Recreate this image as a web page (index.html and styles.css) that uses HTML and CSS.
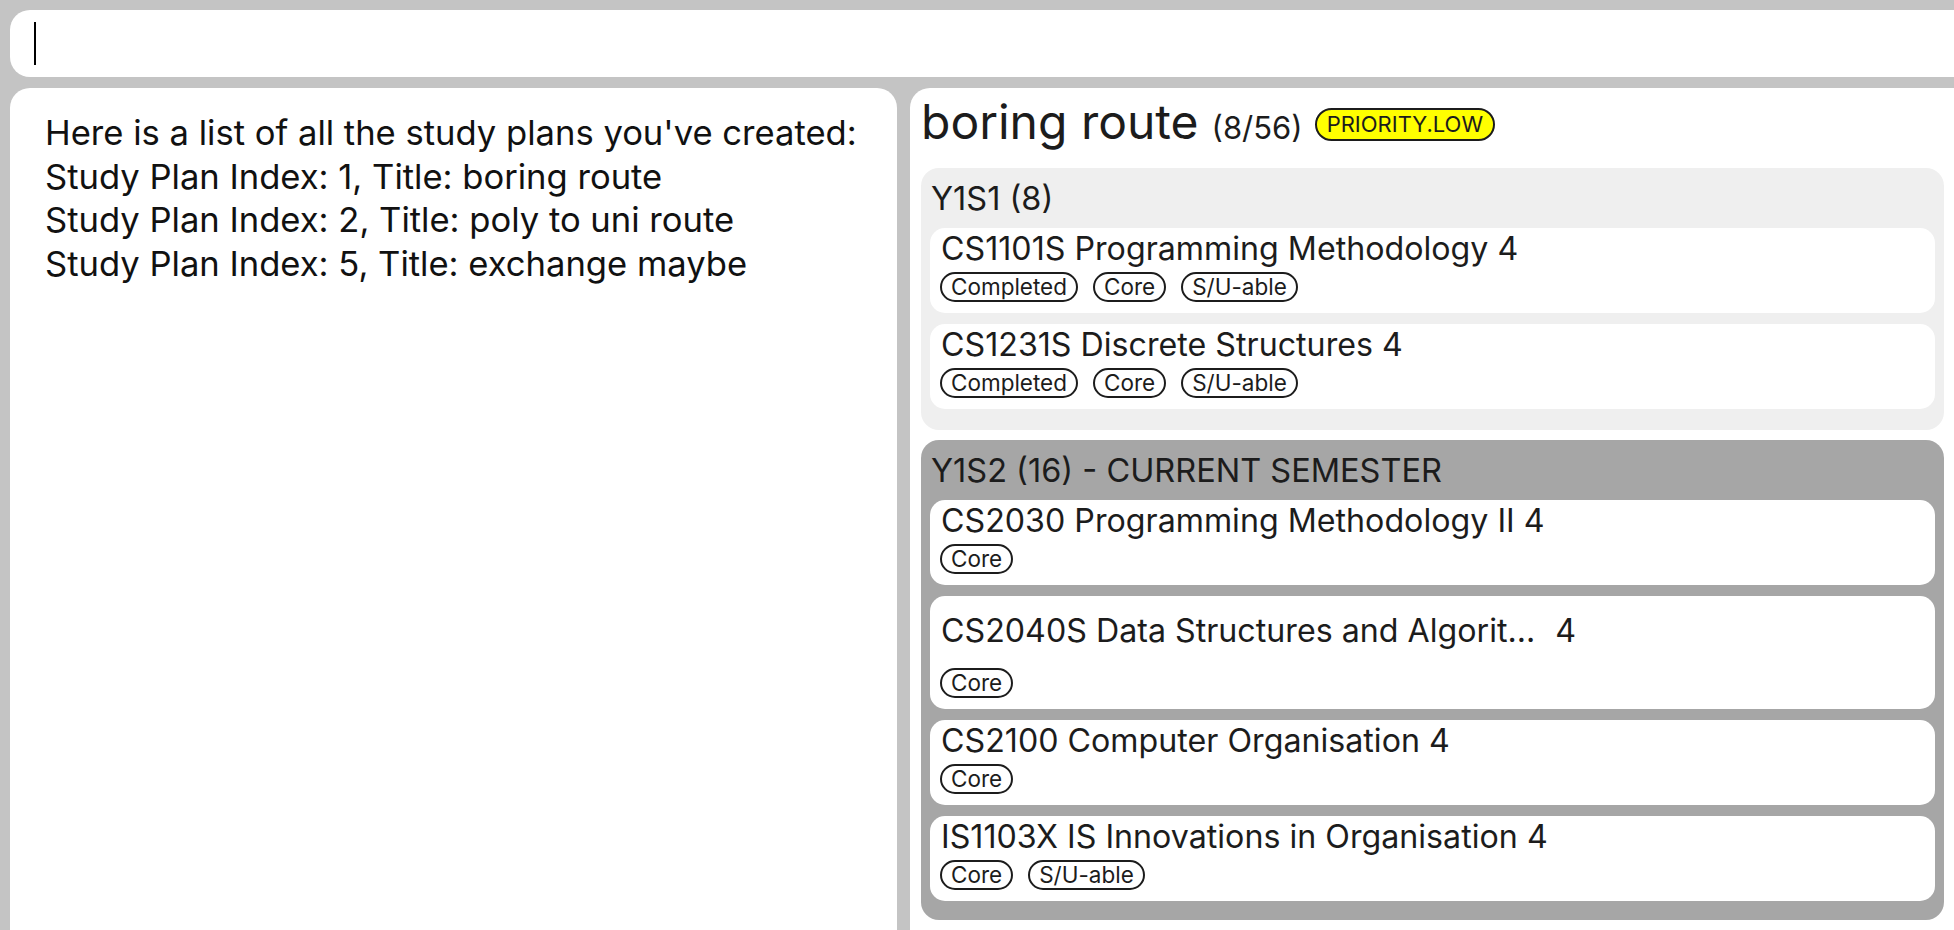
FILE: index.html
```html
<!DOCTYPE html>
<html lang="en">
<head>
<meta charset="utf-8">
<title>Study plans</title>
<link rel="stylesheet" href="styles.css">
</head>
<body>
<div class="app">
  <div class="command"><span class="caret"></span></div>
  <div class="main">
    <section class="result">
      <p>Here is a list of all the study plans you've created:</p>
      <p>Study Plan Index: 1, Title: boring route</p>
      <p>Study Plan Index: 2, Title: poly to uni route</p>
      <p>Study Plan Index: 5, Title: exchange maybe</p>
    </section>
    <section class="plan">
      <div class="plan-head">
        <span class="plan-title">boring route</span>
        <span class="plan-count">(8/56)</span>
        <span class="priority">PRIORITY.LOW</span>
      </div>
      <div class="sem">
        <div class="sem-head">Y1S1 (8)</div>
        <div class="mods">
          <div class="mod">
            <div class="mod-title">CS1101S Programming Methodology 4</div>
            <div class="tags"><span class="tag">Completed</span><span class="tag">Core</span><span class="tag">S/U-able</span></div>
          </div>
          <div class="mod">
            <div class="mod-title">CS1231S Discrete Structures 4</div>
            <div class="tags"><span class="tag">Completed</span><span class="tag">Core</span><span class="tag">S/U-able</span></div>
          </div>
        </div>
      </div>
      <div class="sem sem-current">
        <div class="sem-head">Y1S2 (16) - CURRENT SEMESTER</div>
        <div class="mods">
          <div class="mod">
            <div class="mod-title">CS2030 Programming Methodology II 4</div>
            <div class="tags"><span class="tag">Core</span></div>
          </div>
          <div class="mod">
            <div class="mod-title mod-title-tall">CS2040S Data Structures and Algorit...<span class="mcs">4</span></div>
            <div class="tags"><span class="tag">Core</span></div>
          </div>
          <div class="mod">
            <div class="mod-title">CS2100 Computer Organisation 4</div>
            <div class="tags"><span class="tag">Core</span></div>
          </div>
          <div class="mod">
            <div class="mod-title">IS1103X IS Innovations in Organisation 4</div>
            <div class="tags"><span class="tag">Core</span><span class="tag">S/U-able</span></div>
          </div>
        </div>
      </div>
    </section>
  </div>
</div>
</body>
</html>
```
FILE: styles.css
```css
html, body {
  margin: 0;
  height: 100%;
  overflow: hidden;
}
body {
  background: #c4c4c4;
  font-family: Inter, "Noto Sans", sans-serif;
  color: #1c1c1c;
}
.app {
  display: flex;
  flex-direction: column;
  gap: 11px;
  padding: 10px 0 0 10px;
  height: 100vh;
  box-sizing: border-box;
}
.command {
  flex: none;
  height: 67px;
  background: #fff;
  border-radius: 20px 0 0 20px;
  display: flex;
  align-items: center;
  padding-left: 24px;
}
.caret {
  width: 2px;
  height: 43px;
  background: #000;
}
.main {
  flex: 1;
  min-height: 0;
  display: flex;
  gap: 13px;
}
.result {
  flex: none;
  width: 887px;
  box-sizing: border-box;
  background: #fff;
  border-radius: 20px 20px 0 0;
  padding: 23px 0 0 35px;
  font-size: 34.6px;
  line-height: 43.6px;
  color: #111;
}
.result p {
  margin: 0;
}
.plan {
  flex: 1;
  background: #fff;
  border-radius: 20px 0 0 0;
  padding: 6px 10px 0 11px;
  overflow: hidden;
}
.plan-head {
  display: flex;
  align-items: baseline;
  height: 56px;
  margin-bottom: 18px;
  line-height: 56px;
}
.plan-title {
  font-size: 48px;
  margin-right: 13px;
}
.plan-count {
  font-size: 31px;
  margin-right: 12px;
}
.priority {
  align-self: center;
  height: 33px;
  box-sizing: border-box;
  border: 2px solid #1c1c1c;
  border-radius: 17px;
  background: #ffff00;
  padding: 0 10px;
  font-size: 22px;
  line-height: 29px;
  margin-top: 4px;
}
.sem {
  background: #efefef;
  border-radius: 18px;
  padding: 0 9px 21px;
  margin-bottom: 10px;
}
.sem-current {
  background: #a6a6a6;
  padding-bottom: 19px;
}
.sem-head {
  height: 60px;
  display: flex;
  align-items: center;
  padding-left: 1px;
  font-size: 32.5px;
}
.mods {
  display: flex;
  flex-direction: column;
  gap: 11px;
}
.mod {
  background: #fff;
  border-radius: 15px;
  padding: 4px 10px 11px;
}
.mod-title {
  font-size: 32.2px;
  line-height: 34px;
  height: 34px;
  white-space: nowrap;
  padding-left: 1px;
}
.mod-title-tall {
  height: 62px;
  line-height: 62px;
}
.mcs {
  margin-left: 20px;
}
.tags {
  display: flex;
  gap: 15px;
  margin-top: 6px;
}
.tag {
  height: 30px;
  box-sizing: border-box;
  border: 2px solid #1c1c1c;
  border-radius: 15px;
  padding: 0 9px;
  font-size: 22.5px;
  line-height: 26px;
}
```
